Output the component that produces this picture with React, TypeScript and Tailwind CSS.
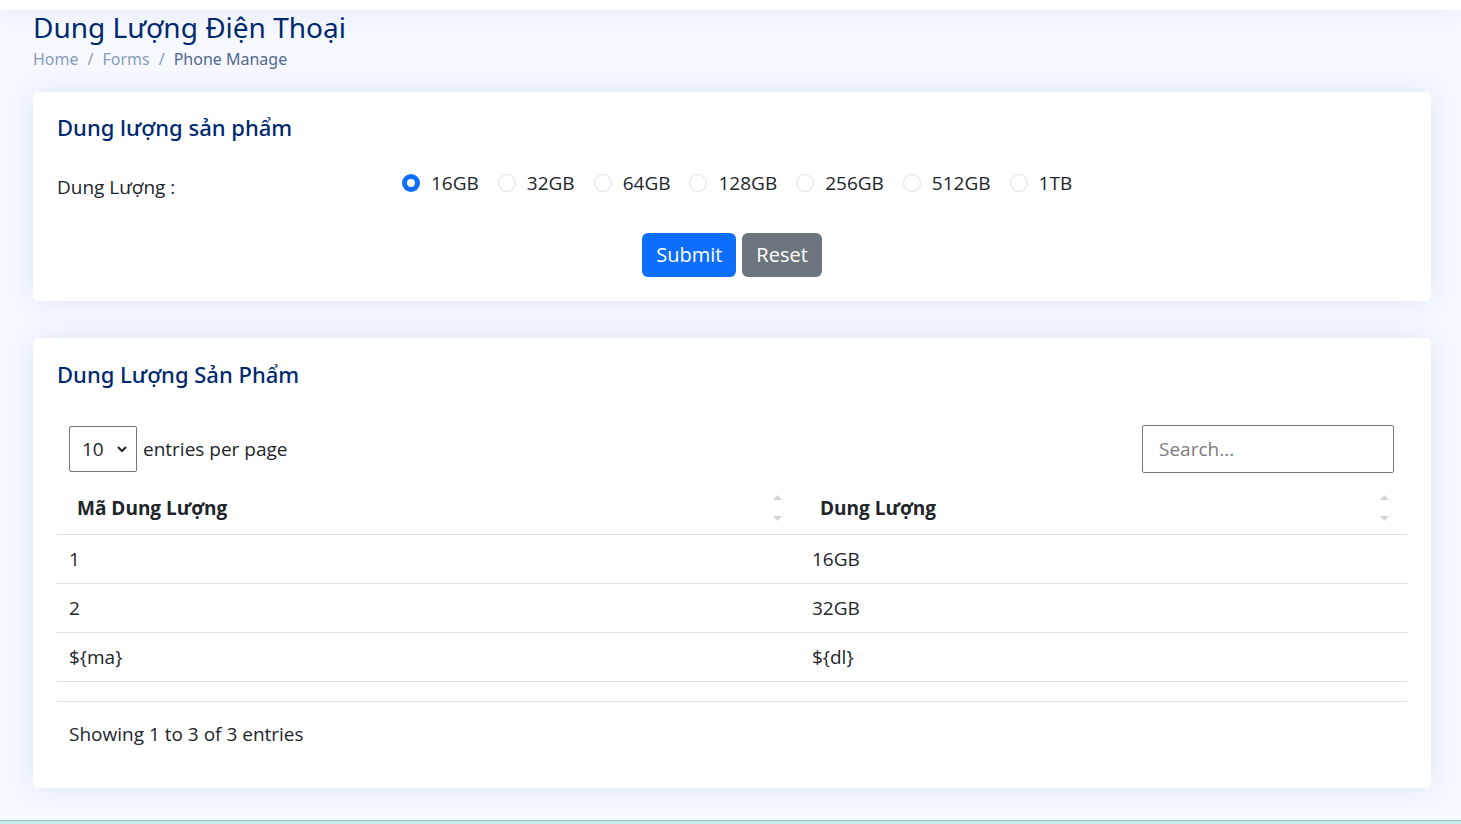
import React from "react";

const sizes = ["16GB", "32GB", "64GB", "128GB", "256GB", "512GB", "1TB"];

const rows = [
  { ma: "1", dl: "16GB" },
  { ma: "2", dl: "32GB" },
  { ma: "${ma}", dl: "${dl}" },
];

function SortArrows() {
  return (
    <div className="flex flex-col justify-between h-[28px] py-[1px]">
      <svg width="9" height="5" viewBox="0 0 9 5">
        <path d="M4.5 0 L9 5 L0 5 Z" fill="#d4d4d4" />
      </svg>
      <svg width="9" height="5" viewBox="0 0 9 5">
        <path d="M0 0 L9 0 L4.5 5 Z" fill="#d4d4d4" />
      </svg>
    </div>
  );
}

export default function App() {
  const body = { fontFamily: '"Open Sans", "Noto Sans", sans-serif' };
  const heading = { fontFamily: '"Noto Sans", "Open Sans", sans-serif' };

  return (
    <div className="h-[824px] overflow-hidden flex flex-col bg-[#f6f9ff] text-[#212529]" style={body}>
      <div className="h-[10px] bg-white shadow-[0_2px_24px_rgba(1,41,112,0.12)] relative z-10" />

      <main className="flex-1 pl-[33px] pr-[30px]">
        <div>
          <h1 className="text-[28px] leading-[34px] text-[#012970]" style={heading}>
            Dung Lượng Điện Thoại
          </h1>
          <nav className="mt-[5px] flex items-center text-[16px] leading-[21px]" style={heading}>
            <span className="text-[#899bbd]">Home</span>
            <span className="px-[9px] text-[#899bbd]">/</span>
            <span className="text-[#899bbd]">Forms</span>
            <span className="px-[9px] text-[#899bbd]">/</span>
            <span className="text-[#51678f]">Phone Manage</span>
          </nav>
        </div>

        {/* form card */}
        <section className="mt-[22px] bg-white rounded-[5px] shadow-[0_0_30px_rgba(1,41,112,0.1)] px-[24px] pt-[21px] pb-[24px]">
          <h5 className="text-[22px] leading-[28px] font-medium text-[#012970]" style={heading}>
            Dung lượng sản phẩm
          </h5>

          <div className="mt-[24px] flex">
            <label className="w-[345px] pt-[9px] text-[19px] leading-[27px]">Dung Lượng :</label>
            <div className="flex items-center gap-[19px] text-[19px] leading-[27px]">
              {sizes.map((s, i) => (
                <label key={s} className="flex items-center gap-[11px]">
                  {i === 0 ? (
                    <span className="w-[18px] h-[18px] rounded-full bg-[#0d6efd] flex items-center justify-center">
                      <span className="w-[8px] h-[8px] rounded-full bg-white" />
                    </span>
                  ) : (
                    <span className="w-[18px] h-[18px] rounded-full border border-[#dee2e6] bg-white" />
                  )}
                  <span>{s}</span>
                </label>
              ))}
            </div>
          </div>

          <div className="mt-[32px] flex justify-center gap-[6px]">
            <button className="h-[44px] px-[14px] rounded-[6px] bg-[#0d6efd] text-white text-[20px]">
              Submit
            </button>
            <button className="h-[44px] px-[14px] rounded-[6px] bg-[#6c757d] text-white text-[20px]">
              Reset
            </button>
          </div>
        </section>

        {/* table card */}
        <section className="mt-[37px] bg-white rounded-[5px] shadow-[0_0_30px_rgba(1,41,112,0.1)] px-[24px] pt-[22px] pb-[40px]">
          <h5 className="text-[22px] leading-[28px] font-medium text-[#012970]" style={heading}>
            Dung Lượng Sản Phẩm
          </h5>

          <div className="mt-[37px] flex items-center justify-between pl-[12px] pr-[13px]">
            <div className="flex items-center gap-[6px] text-[19px]">
              <div className="w-[68px] h-[46px] border border-[#767676] rounded-[2px] flex items-center justify-between pl-[12px] pr-[8px]">
                <span>10</span>
                <svg width="12" height="8" viewBox="0 0 12 8">
                  <path d="M2 2 L6 6 L10 2" fill="none" stroke="#222" strokeWidth="2" />
                </svg>
              </div>
              <span>entries per page</span>
            </div>
            <div className="w-[252px] h-[48px] border border-[#767676] rounded-[2px] flex items-center px-[16px] text-[19px] text-[#7b7b7b]">
              Search...
            </div>
          </div>

          <div className="mt-[15px] text-[19px]">
            <div className="grid grid-cols-[743px_1fr] h-[47px] border-b border-[#dee2e6]">
              <div className="flex items-center justify-between pl-[20px] pr-[18px] pb-[6px] font-bold">
                <span>Mã Dung Lượng</span>
                <SortArrows />
              </div>
              <div className="flex items-center justify-between pl-[20px] pr-[18px] pb-[6px] font-bold">
                <span>Dung Lượng</span>
                <SortArrows />
              </div>
            </div>
            {rows.map((r) => (
              <div key={r.ma} className="grid grid-cols-[743px_1fr] h-[49px] border-b border-[#dee2e6]">
                <div className="flex items-center px-[12px]">{r.ma}</div>
                <div className="flex items-center px-[12px]">{r.dl}</div>
              </div>
            ))}
            <div className="h-[20px] border-b border-[#dee2e6]" />
          </div>

          <div className="mt-[19px] pl-[12px] text-[19px] leading-[27px]">Showing 1 to 3 of 3 entries</div>
        </section>
      </main>

      <div className="h-[4px] border-t border-[#9cc6c3] bg-[#c8ece8]" />
    </div>
  );
}
